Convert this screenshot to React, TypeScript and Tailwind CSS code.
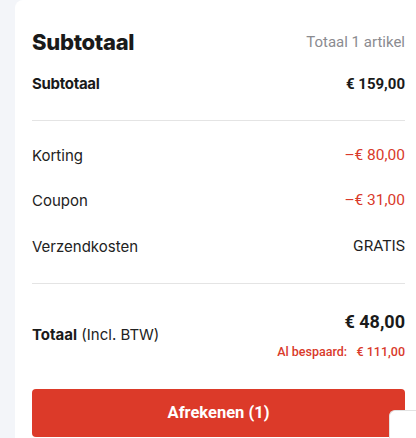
import React from "react";

function Row({ label, value, red }: { label: string; value: string; red?: boolean }) {
  return (
    <div className="flex items-center justify-between h-[20px]">
      <span className="text-[15px] text-[#222222] font-['Inter']">{label}</span>
      <span className={`text-[15.5px] font-['Roboto'] ${red ? "text-[#d93a2b]" : "text-[#1f1f1f]"}`}>{value}</span>
    </div>
  );
}

export default function App() {
  return (
    <div className="relative w-[416px] h-[438px] overflow-hidden bg-[#f3f5f9]">
      <div className="ml-[15px] h-full bg-white rounded-tl-[8px] pl-[17px] pr-[11px] pt-[28px]">
        <div className="flex items-center justify-between h-[28px]">
          <span className="text-[22px] font-extrabold text-[#1a1a1a] font-['Inter'] tracking-[-0.3px]">Subtotaal</span>
          <span className="text-[15px] text-[#8b8b90] font-['Roboto']">Totaal 1 artikel</span>
        </div>
        <div className="mt-[18px] flex items-center justify-between h-[20px]">
          <span className="text-[15px] font-bold text-[#1a1a1a] font-['Inter'] tracking-[-0.3px]">Subtotaal</span>
          <span className="text-[15px] font-bold text-[#1a1a1a] font-['Roboto']">€ 159,00</span>
        </div>
        <div className="mt-[26px] h-px bg-[#e4e4e4]" />
        <div className="mt-[25px] flex flex-col">
          <Row label="Korting" value="–€ 80,00" red />
          <div className="h-[25px]" />
          <Row label="Coupon" value="–€ 31,00" red />
          <div className="h-[26px]" />
          <Row label="Verzendkosten" value="GRATIS" />
        </div>
        <div className="mt-[26px] h-px bg-[#e4e4e4]" />
        <div className="mt-[26px] flex items-center justify-between">
          <span className="text-[15px] text-[#222222] font-['Inter']">
            <span className="font-bold text-[#1a1a1a]">Totaal</span> (Incl. BTW)
          </span>
          <div className="flex flex-col items-end">
            <span className="h-[24px] leading-[24px] text-[18px] font-bold text-[#1a1a1a] font-['Roboto']">€ 48,00</span>
            <span className="mt-[10px] h-[16px] leading-[16px] text-[12.5px] font-medium text-[#d93a2b] font-['Roboto']">
              Al bespaard:&nbsp;&nbsp; € 111,00
            </span>
          </div>
        </div>
        <button className="mt-[29px] w-full h-[48px] rounded-[4px] bg-[#dc3a29] text-white text-[16.5px] font-bold font-['Roboto']">
          Afrekenen (1)
        </button>
      </div>
      <div className="absolute left-[389px] top-[410px] w-[40px] h-[40px] bg-white border-t border-l border-[#e2e2e2] rounded-tl-[6px]" />
    </div>
  );
}
